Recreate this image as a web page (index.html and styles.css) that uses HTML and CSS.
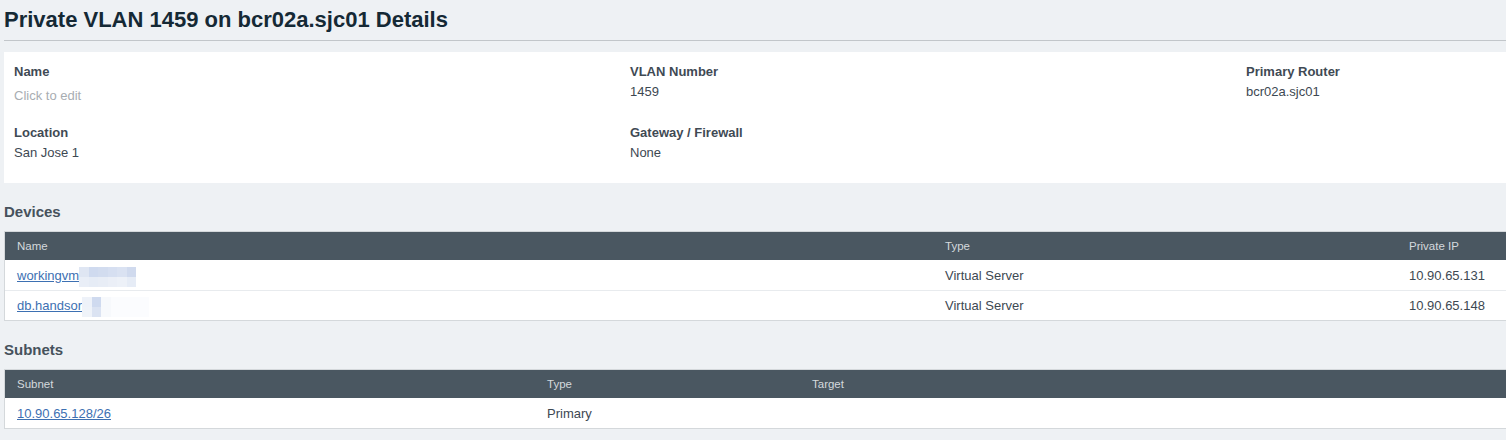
FILE: index.html
```html
<!DOCTYPE html>
<html>
<head>
<meta charset="utf-8">
<link rel="stylesheet" href="styles.css">
</head>
<body>
<div class="page">
  <h1 class="title">Private VLAN 1459 on bcr02a.sjc01 Details</h1>
  <div class="details">
    <div class="col col1">
      <div class="field">
        <div class="label">Name</div>
        <div class="value placeholder">Click to edit</div>
      </div>
      <div class="field">
        <div class="label">Location</div>
        <div class="value">San Jose 1</div>
      </div>
    </div>
    <div class="col col2">
      <div class="field">
        <div class="label">VLAN Number</div>
        <div class="value">1459</div>
      </div>
      <div class="field">
        <div class="label">Gateway / Firewall</div>
        <div class="value">None</div>
      </div>
    </div>
    <div class="col col3">
      <div class="field">
        <div class="label">Primary Router</div>
        <div class="value">bcr02a.sjc01</div>
      </div>
    </div>
  </div>

  <h2 class="section">Devices</h2>
  <div class="table devices">
    <div class="row head">
      <div class="cell">Name</div>
      <div class="cell">Type</div>
      <div class="cell">Private IP</div>
    </div>
    <div class="row">
      <div class="cell"><a class="link" href="#">workingvm</a><span class="blur blur1"><i></i><i></i><i></i><i></i><i></i><i></i><i></i><i></i><i></i><i></i><i></i><i></i></span></div>
      <div class="cell">Virtual Server</div>
      <div class="cell">10.90.65.131</div>
    </div>
    <div class="row">
      <div class="cell"><a class="link" href="#">db.handsor</a><span class="blur blur2"><i></i><i></i><i></i><i></i><i></i><i></i><i></i><i></i><i></i><i></i><i></i><i></i><i></i><i></i></span></div>
      <div class="cell">Virtual Server</div>
      <div class="cell">10.90.65.148</div>
    </div>
  </div>

  <h2 class="section">Subnets</h2>
  <div class="table subnets">
    <div class="row head">
      <div class="cell">Subnet</div>
      <div class="cell">Type</div>
      <div class="cell">Target</div>
    </div>
    <div class="row">
      <div class="cell"><a class="link" href="#">10.90.65.128/26</a></div>
      <div class="cell">Primary</div>
      <div class="cell"></div>
    </div>
  </div>
</div>
</body>
</html>
```

FILE: styles.css
```css
html, body {
  margin: 0;
  padding: 0;
  background: #eef1f4;
}
body {
  font-family: "Liberation Sans", Arial, sans-serif;
  color: #3d4852;
}
.page {
  padding: 0 0 0 4px;
  width: 1502px;
  overflow: hidden;
}
.title {
  margin: 0;
  font-size: 22px;
  font-weight: 700;
  color: #152935;
  height: 41px;
  line-height: 40px;
  border-bottom: 1px solid #c2c6ca;
  box-sizing: border-box;
}
.details {
  margin-top: 11px;
  background: #fff;
  height: 131px;
  display: grid;
  grid-template-columns: 616px 616px 1fr;
  padding-left: 10px;
  box-sizing: border-box;
}
.col {
  padding-top: 12px;
}
.field {
  height: 61px;
}
.label {
  font-size: 13px;
  font-weight: 700;
  color: #3f4a54;
  line-height: 16px;
}
.value {
  font-size: 13px;
  color: #3d4852;
  line-height: 16px;
  margin-top: 4px;
}
.value.placeholder {
  color: #a8adb2;
  margin-top: 8px;
}
.section {
  margin: 0;
  font-size: 15px;
  font-weight: 700;
  color: #46525c;
  height: 48px;
  line-height: 58px;
  box-sizing: border-box;
}
.table {
  border: 1px solid #d4d8db;
  border-top: 0;
  background: #fff;
  margin-right: -4px;
}
.row {
  display: grid;
  height: 30px;
  box-sizing: border-box;
  align-items: center;
  font-size: 13px;
  color: #3d4852;
  border-top: 1px solid #e8ebee;
}
.row.head {
  background: #4a5761;
  color: #d4d9dd;
  font-size: 11.5px;
  height: 29px;
  border-top: 1px solid #d4d8db;
}
.devices .row {
  grid-template-columns: 928px 464px 1fr;
}
.subnets .row {
  grid-template-columns: 530px 265px 1fr;
}
.row.head + .row {
  border-top: 0;
}
.cell {
  padding-left: 12px;
  white-space: nowrap;
  display: flex;
  align-items: center;
}
.link {
  color: #3d70b2;
  text-decoration: underline;
}
.blur {
  display: inline-grid;
  grid-template-rows: 10px 10px;
  grid-auto-flow: column;
  margin-left: 0;
  margin-top: 3px;
}
.blur i {
  display: block;
  height: 10px;
}
.blur1 {
  grid-template-columns: repeat(6, 9.5px);
}
.blur1 i:nth-child(1) { background: #dfe6f3; }
.blur1 i:nth-child(2) { background: #e9eef7; }
.blur1 i:nth-child(3) { background: #cfdaef; }
.blur1 i:nth-child(4) { background: #e6ecf6; }
.blur1 i:nth-child(5) { background: #d2dcef; }
.blur1 i:nth-child(6) { background: #e8edf6; }
.blur1 i:nth-child(7) { background: #d6dff1; }
.blur1 i:nth-child(8) { background: #ebeff7; }
.blur1 i:nth-child(9) { background: #dae2f2; }
.blur1 i:nth-child(10) { background: #edf1f8; }
.blur1 i:nth-child(11) { background: #d0daee; }
.blur1 i:nth-child(12) { background: #e6ecf6; }
.blur2 {
  grid-template-columns: repeat(7, 9.5px);
}
.blur2 i { background: #fbfcfe; }
.blur2 i:nth-child(1) { background: #eef2f9; }
.blur2 i:nth-child(2) { background: #eff3f9; }
.blur2 i:nth-child(3) { background: #cfdaef; }
.blur2 i:nth-child(4) { background: #dbe3f2; }
.blur2 i:nth-child(5) { background: #f7f9fc; }
.blur2 i:nth-child(6) { background: #f7f9fc; }
```
